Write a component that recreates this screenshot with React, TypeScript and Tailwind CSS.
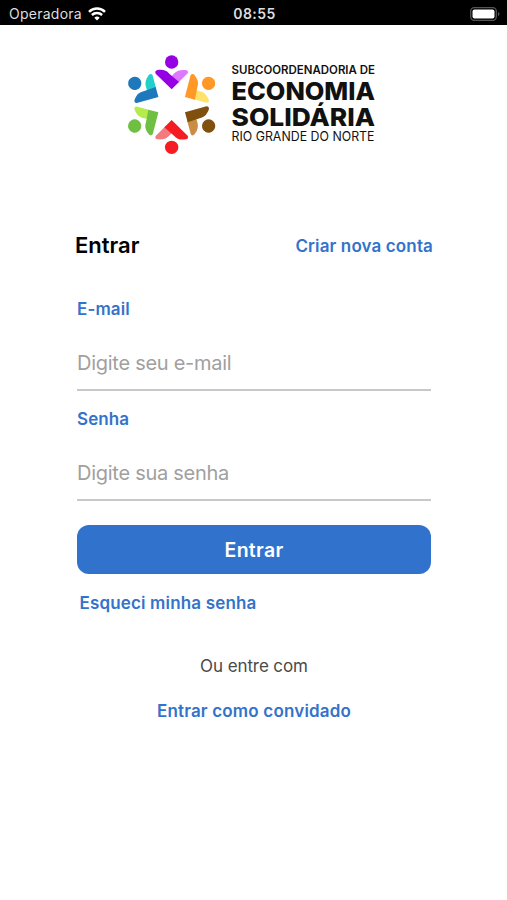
import React from 'react';

// One figure per side of the ring, clockwise from the top
const FIGURES = [
  { angle: 0, dark: '#9600e4', light: '#dd78ff' },
  { angle: 60, dark: '#ff9826', light: '#ffe26c' },
  { angle: 120, dark: '#80500f', light: '#cb8d46' },
  { angle: 180, dark: '#f51d22', light: '#f37b80' },
  { angle: 240, dark: '#6fbf42', light: '#b4ec50' },
  { angle: 300, dark: '#1d78bc', light: '#23cfcb' },
];

const Logo: React.FC = () => (
  <svg width="260" height="108" viewBox="0 0 260 108" role="img" aria-label="Economia Solidária">
    <g transform="scale(0.33333)">
      {FIGURES.map((figure) => (
        <g key={figure.angle} transform={`rotate(${figure.angle} 155 164)`}>
          <circle cx="155" cy="36" r="20" fill={figure.dark} />
          <path d="M152 82 L163 70 C172 61 181 59 197 60 Q207 62 203 70 L174 99 Z" fill={figure.light} />
          <path d="M107 71 Q103 62 113 60 C130 58 139 61 148 71 L177 96 L155 118 Z" fill={figure.dark} />
        </g>
      ))}
    </g>
    <g fill="#111" fontFamily="Inter, 'Liberation Sans', sans-serif">
      <text x="111.500" y="24" fontSize="11.500" fontWeight="600" textLength="143.500" lengthAdjust="spacingAndGlyphs">SUBCOORDENADORIA DE</text>
      <text x="111.500" y="50" fontSize="25" fontWeight="800" textLength="143.500" lengthAdjust="spacingAndGlyphs">ECONOMIA</text>
      <text x="111.500" y="76" fontSize="25" fontWeight="800" textLength="143.500" lengthAdjust="spacingAndGlyphs">SOLIDÁRIA</text>
      <text x="111.500" y="91.200" fontSize="13" fontWeight="400" textLength="143" lengthAdjust="spacingAndGlyphs">RIO GRANDE DO NORTE</text>
    </g>
  </svg>
);

const StatusBar: React.FC = () => (
  <header className="grid h-[25px] grid-cols-3 items-center bg-black pt-[2px] pl-[9px] pr-[7px] text-[14px] leading-5 text-[#ddd]">
    <div className="flex items-center gap-[6px]">
      <span className="tracking-[0.25px]">Operadora</span>
      <svg width="18" height="14" viewBox="0 0 18 14" fill="none" stroke="#fff" strokeWidth="2.500">
        <path d="M1 4.800a11.500 11.500 0 0 1 16 0M3.900 8a7.300 7.300 0 0 1 10.200 0" />
        <path d="M9 13.500 6.300 10.800a3.900 3.900 0 0 1 5.400 0Z" fill="#fff" stroke="none" />
      </svg>
    </div>
    <span className="text-center font-semibold tracking-[0.4px]">08:55</span>
    <svg className="justify-self-end" width="30" height="14" viewBox="0 0 30 14">
      <rect x=".7" y=".7" width="25.600" height="12.600" rx="3.500" fill="none" stroke="#555" strokeWidth="1.300" />
      <rect x="2.500" y="2.500" width="22" height="9" rx="2" fill="#fff" />
      <path d="M28 5v4q1.500-.5 1.500-2T28 5" fill="#555" />
    </svg>
  </header>
);

interface FieldProps {
  label: string;
  type: string;
  placeholder: string;
}

const Field: React.FC<FieldProps> = ({ label, type, placeholder }) => (
  <label className="flex flex-col border-b-2 border-[#c8c8c8] pb-2">
    <span className="text-[17px] leading-6 font-semibold tracking-[0.1px] text-[#3373cb]">{label}</span>
    <input
      type={type}
      placeholder={placeholder}
      className="mt-6 h-9 w-full text-[20px] tracking-[-0.27px] outline-none placeholder:text-[#a0a0a0]"
    />
  </label>
);

export default function App() {
  return (
    <div className="min-h-[900px] bg-white font-['Inter','Liberation_Sans',sans-serif]">
      <StatusBar />
      <div className="mt-[25px] pl-[120px]">
        <Logo />
      </div>

      <main className="mt-[72px] flex flex-col pr-[76px] pl-[77px] leading-6">
        <div className="-mx-[2px] flex h-[30px] items-center justify-between">
          <h1 className="text-[22px] font-semibold text-black">Entrar</h1>
          <a href="#" className="pt-px text-[17px] font-semibold tracking-[0.13px] text-[#3373cb]">Criar nova conta</a>
        </div>

        <form className="mt-[37px] flex flex-col">
          <div className="flex flex-col gap-4">
            <Field label="E-mail" type="email" placeholder="Digite seu e-mail" />
            <Field label="Senha" type="password" placeholder="Digite sua senha" />
          </div>
          <button type="button" className="mt-6 h-[49px] rounded-xl bg-[#3072cc] text-[19.500px] font-semibold tracking-[0.3px] text-white">
            Entrar
          </button>
        </form>

        <a href="#" className="mt-[17px] ml-[2.500px] self-start text-[17px] font-semibold tracking-[0.16px] text-[#3373cb]">Esqueci minha senha</a>
        <p className="mt-[39px] text-center text-[17px] tracking-[-0.1px] text-[#4a4a4a]">Ou entre com</p>
        <a href="#" className="mt-[21px] self-center text-[17px] font-semibold tracking-[0.18px] text-[#3373cb]">Entrar como convidado</a>
      </main>
    </div>
  );
}
